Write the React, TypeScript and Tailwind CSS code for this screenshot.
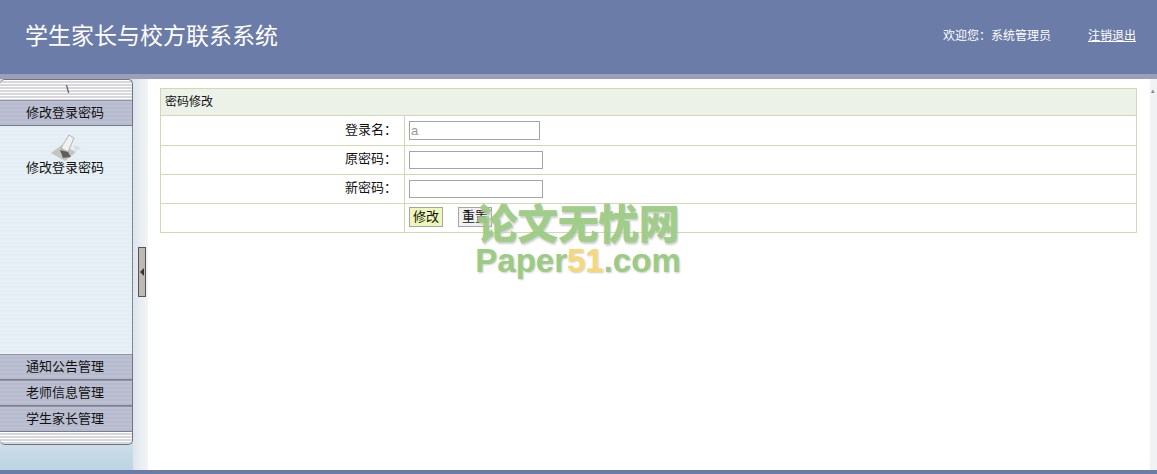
const font = 'font-["Liberation_Sans","Noto_Sans_CJK_SC",sans-serif]';

function AccordionBar({ title }: { title: string }) {
  return (
    <div className="flex h-[26px] items-center justify-center border-t border-b border-t-[#9095a6] border-b-[#787d8c] bg-[repeating-linear-gradient(180deg,#bcc0d2_0px,#bcc0d2_2px,#b6bacd_2px,#b6bacd_4px)] pr-[2px] text-[13px] text-[#111]">
      {title}
    </div>
  );
}

function Sidebar() {
  return (
    <div className="flex h-full w-[133px] shrink-0 flex-col bg-[linear-gradient(180deg,#d4e3ec_90%,#bcd4e2_100%)]">
      <div className="relative h-[21px] shrink-0 rounded-t-[5px] border-t border-r border-[#6f7480] bg-[repeating-linear-gradient(180deg,#ffffff_0px,#ffffff_1px,#d6d8de_1px,#d6d8de_3px)]">
        <span className="absolute left-[66px] top-[3px] text-[11px] leading-[12px] text-[#222]">\</span>
      </div>
      <div className="border-r border-[#6f7480]">
        <AccordionBar title="修改登录密码" />
      </div>
      <div className="flex h-[228px] shrink-0 flex-col items-center border-r border-[#7f8794] bg-[repeating-linear-gradient(180deg,#e3edf3_0px,#e3edf3_2px,#e7f0f4_2px,#e7f0f4_4px)] pt-[7px] pr-[2px]">
        <svg width="34" height="28" viewBox="0 0 34 28">
          <path d="M3 20 L14 12 L28 19 L17 28 Z" fill="#c4c4c2" />
          <path d="M13 15 L21 2 L26 5 L20 19 Z" fill="#f1f1f1" stroke="#9a9a9a" strokeWidth="0.7" />
          <path d="M12 17 L20 19 L23 24 L15 25 Z" fill="#5d5f58" />
          <path d="M26 12 L33 15 L27 18 Z" fill="#d8dcdc" />
        </svg>
        <div className="mt-[-1px] text-[13px] leading-[15px] text-[#111]">修改登录密码</div>
      </div>
      <div className="border-r border-[#6f7480]">
        <AccordionBar title="通知公告管理" />
        <AccordionBar title="老师信息管理" />
        <AccordionBar title="学生家长管理" />
      </div>
      <div className="h-[13px] shrink-0 rounded-b-[5px] border-r border-b border-[#6f7480] bg-[repeating-linear-gradient(180deg,#ffffff_0px,#ffffff_1px,#d6d8de_1px,#d6d8de_3px)]" />
    </div>
  );
}

function Row({ label, height, children }: { label?: string; height: string; children: React.ReactNode }) {
  return (
    <tr className={height}>
      <td className="border border-[#d3d8b4] pr-[7px] pb-[2px] text-right text-[13px] text-[#111]">{label}</td>
      <td className="border border-[#d3d8b4] pl-[4px] align-middle">{children}</td>
    </tr>
  );
}

export default function App() {
  return (
    <div className={`flex h-[474px] w-[1157px] flex-col overflow-hidden bg-white ${font}`}>
      <header className="flex h-[74px] shrink-0 items-center justify-between bg-[#6b7ca8] pb-[2px] pl-[25px] pr-[21px] text-white">
        <h1 className="text-[23px] leading-none font-normal">学生家长与校方联系系统</h1>
        <div className="flex items-center gap-[37px] text-[12px]">
          <span>欢迎您：系统管理员</span>
          <a className="underline">注销退出</a>
        </div>
      </header>
      <div className="h-[5px] shrink-0 bg-[#9a9fbc]" />

      <div className="flex min-h-0 flex-1">
        <Sidebar />
        <div className="flex w-[15px] shrink-0 items-center bg-[linear-gradient(90deg,#dde6ec,#f2f4f6)] pb-[5px] pl-[5px]">
          <div className="flex h-[50px] w-[8px] items-center justify-center border border-[#555] bg-[#bdbab4]">
            <span className="h-0 w-0 border-y-[4px] border-r-[4px] border-y-transparent border-r-[#333]" />
          </div>
        </div>

        <main className="relative min-w-0 flex-1 bg-white pl-[12px] pr-[13px] pt-[9px]">
          <table className="w-[977px] table-fixed border-collapse border border-[#d3d8b4]">
            <colgroup>
              <col className="w-[244px]" />
              <col />
            </colgroup>
            <tbody>
              <tr className="h-[27px]">
                <td colSpan={2} className="border border-[#d3d8b4] bg-[#edf2e9] pl-[4px] text-[12px] text-[#111]">
                  密码修改
                </td>
              </tr>
              <Row label="登录名：" height="h-[30px]">
                <input readOnly value="a" className="block h-[19px] w-[131px] border border-[#a5a5a5] bg-white px-[1px] text-[13px] text-[#999]" />
              </Row>
              <Row label="原密码：" height="h-[29px]">
                <input className="block h-[18px] w-[134px] border border-[#a5a5a5] bg-white" />
              </Row>
              <Row label="新密码：" height="h-[29px]">
                <input className="block h-[18px] w-[134px] border border-[#a5a5a5] bg-white" />
              </Row>
              <Row height="h-[29px]">
                <div className="flex gap-[15px] pb-[2px]">
                  <button className="h-[20px] w-[34px] border border-[#a5a5a5] bg-[#eef7b8] pb-[2px] text-[13px] leading-none text-[#111]">修改</button>
                  <button className="h-[20px] w-[34px] border border-[#a5a5a5] bg-[#f1f1f1] pb-[2px] text-[13px] leading-none text-[#111]">重置</button>
                </div>
              </Row>
            </tbody>
          </table>

          {/* watermark */}
          <div className="pointer-events-none absolute left-[328px] top-[124px] flex w-[204px] flex-col items-center">
            <div className="text-[41px] leading-[44px] font-black tracking-[-0.5px] text-[#9ccb84] opacity-95 [text-shadow:1px_2px_2px_#ccc]">论文无忧网</div>
            <div className="-mt-[2px] flex text-[33px] leading-[32px] font-black text-[#9ccb84] [text-shadow:1px_1px_2px_#ccc]">
              Paper<span className="text-[#f7d878]">51</span>.com
            </div>
          </div>
        </main>

        <div className="relative w-[7px] shrink-0 bg-[#f1f2f4]">
          <span className="absolute left-[1px] top-[8px] text-[7px] leading-none text-[#888]">▴</span>
        </div>
      </div>
      <div className="h-[4px] shrink-0 bg-[#6b7ca8]" />
    </div>
  );
}
